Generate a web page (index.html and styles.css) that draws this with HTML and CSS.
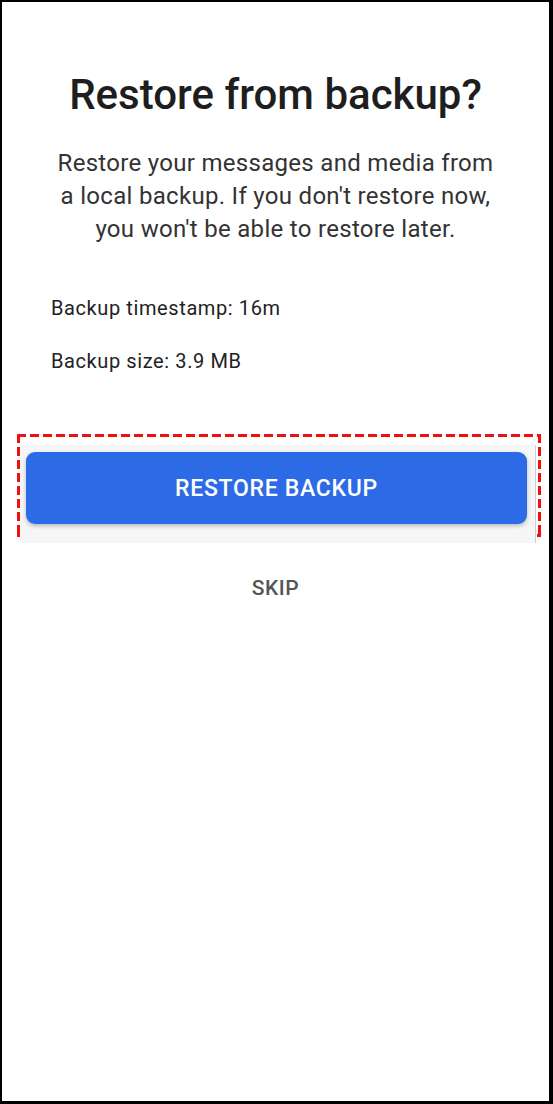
FILE: index.html
```html
<!DOCTYPE html>
<html lang="en">
<head>
    <meta charset="UTF-8">
    <meta name="viewport" content="width=device-width, initial-scale=1.0">
    <title>Restore from backup?</title>
    <link rel="stylesheet" href="styles.css">
</head>
<body>
    <div class="screen">
        <h1 class="title">Restore from backup?</h1>
        <p class="intro">Restore your messages and media from<br>a local backup. If you don't restore now,<br>you won't be able to restore later.</p>

        <div class="details">
            <p class="detail">Backup timestamp: 16m</p>
            <p class="detail">Backup size: 3.9 MB</p>
        </div>

        <div class="highlight">
            <div class="button-wrap">
                <button class="restore-button">RESTORE BACKUP</button>
            </div>
        </div>

        <button class="skip-button">SKIP</button>
    </div>
</body>
</html>
```

FILE: styles.css
```css
* {
    box-sizing: border-box;
}
html, body {
    margin: 0;
    height: 100%;
}
body {
    font-family: Roboto, 'Liberation Sans', sans-serif;
    background: #000;
    padding: 2px 4px 3px 2px;
}
.screen {
    height: 100%;
    background: #fff;
    display: flex;
    flex-direction: column;
    align-items: center;
}
.title {
    margin: 68px 0 0;
    font-size: 42px;
    font-weight: 500;
    line-height: 50px;
    color: #1e1e1e;
}
.intro {
    margin: 27px 0 0;
    font-size: 24px;
    letter-spacing: 0.3px;
    line-height: 33px;
    color: #333;
    text-align: center;
}
.details {
    align-self: stretch;
    padding-left: 49px;
    margin-top: 49px;
}
.detail {
    margin: 0 0 27px;
    font-size: 20px;
    letter-spacing: 0.6px;
    line-height: 26px;
    color: #222;
}
.detail:last-child {
    margin-bottom: 0;
}
/* dashed red frame drawn with gradients to get the long dashes */
.highlight {
    align-self: stretch;
    margin: 60px 8px 0 15px;
    height: 103px;
    position: relative;
    background:
        repeating-linear-gradient(90deg, #ee1111 0 9px, transparent 9px 13px) top left / 100% 3px no-repeat,
        repeating-linear-gradient(90deg, #ee1111 0 9px, transparent 9px 13px) bottom left / 100% 3px no-repeat,
        repeating-linear-gradient(180deg, #ee1111 0 9px, transparent 9px 13px) top left / 3px 100% no-repeat,
        repeating-linear-gradient(180deg, #ee1111 0 9px, transparent 9px 13px) top right / 3px 100% no-repeat;
}
.button-wrap {
    position: absolute;
    left: 3px;
    right: 5px;
    top: 11px;
    height: 98px;
    background: #f6f6f6;
    border-right: 1px solid #cfcfcf;
    padding: 7px 8px 0 6px;
}
.restore-button {
    display: block;
    width: 100%;
    height: 72px;
    border: none;
    border-radius: 9px;
    background: #2d6be6;
    color: #fff;
    font-family: inherit;
    font-size: 23px;
    font-weight: 500;
    letter-spacing: 0.7px;
    box-shadow: 0 2px 4px rgba(0,0,0,0.25);
}
.skip-button {
    margin-top: 38px;
    padding: 0;
    border: none;
    background: none;
    font-family: inherit;
    font-size: 21px;
    font-weight: 500;
    letter-spacing: 0.5px;
    line-height: 26px;
    color: #555;
}
```
